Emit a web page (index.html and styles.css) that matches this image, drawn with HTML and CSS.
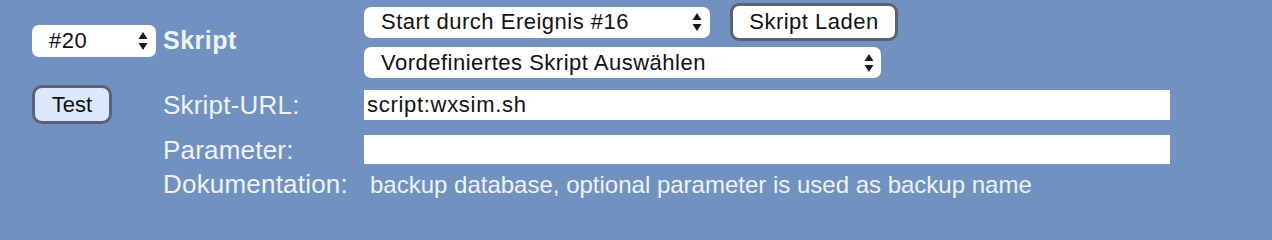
FILE: index.html
```html
<!DOCTYPE html>
<html lang="de">
<head>
<meta charset="utf-8">
<title>Skript</title>
<link rel="stylesheet" href="styles.css">
</head>
<body>
<div class="form">
  <div class="cell c1 r1">
    <div class="select sel-num" role="combobox"><span>#20</span>
      <svg class="arrows" viewBox="0 0 10 18" width="10" height="18"><path d="M5 0 L9.5 7 L0.5 7 Z M0.5 11 L9.5 11 L5 18 Z"/></svg>
    </div>
  </div>
  <div class="cell c2 r1"><span class="title">Skript</span></div>
  <div class="cell c3 r1 stack">
    <div class="line">
      <div class="select sel-event" role="combobox"><span>Start durch Ereignis #16</span>
        <svg class="arrows" viewBox="0 0 10 18" width="10" height="18"><path d="M5 0 L9.5 7 L0.5 7 Z M0.5 11 L9.5 11 L5 18 Z"/></svg>
      </div>
      <button class="btn btn-load">Skript Laden</button>
    </div>
    <div class="select sel-pre" role="combobox"><span>Vordefiniertes Skript Auswählen</span>
      <svg class="arrows" viewBox="0 0 10 18" width="10" height="18"><path d="M5 0 L9.5 7 L0.5 7 Z M0.5 11 L9.5 11 L5 18 Z"/></svg>
    </div>
  </div>

  <div class="cell c1 r2"><button class="btn btn-test">Test</button></div>
  <div class="cell c2 r2 label">Skript-URL:</div>
  <div class="cell c3 r2"><input class="field" type="text" value="script:wxsim.sh"></div>

  <div class="cell c2 r3 label">Parameter:</div>
  <div class="cell c3 r3"><input class="field" type="text" value=""></div>

  <div class="cell c2 r4 label">Dokumentation:</div>
  <div class="cell c3 r4 doc">backup database, optional parameter is used as backup name</div>
</div>
</body>
</html>
```

FILE: styles.css
```css
html, body {
  margin: 0;
  padding: 0;
  background: #7191c0;
}
body {
  width: 1272px;
  height: 206px;
  overflow: hidden;
  font-family: "Liberation Sans", Arial, sans-serif;
}
.form {
  display: grid;
  grid-template-columns: 131px 201px 1fr;
  grid-template-rows: 75px 53px 37px 32px;
  padding: 3px 0 0 32px;
}
.cell {
  display: flex;
  align-items: center;
  min-width: 0;
}
.c1 { grid-column: 1; }
.c2 { grid-column: 2; }
.c3 { grid-column: 3; }
.r1 { grid-row: 1; }
.r2 { grid-row: 2; }
.r3 { grid-row: 3; }
.r4 { grid-row: 4; }

.title {
  font-weight: bold;
  font-size: 25px;
  line-height: 1;
  letter-spacing: 0.5px;
  color: #eef1f7;
  margin-top: -1px;
}
.label {
  font-size: 26px;
  line-height: 30px;
  letter-spacing: 0.2px;
  color: #eef1f7;
}
.stack {
  flex-direction: column;
  align-items: flex-start;
  justify-content: center;
  gap: 6px;
}
.line {
  display: flex;
  align-items: center;
  gap: 20px;
}
.select {
  box-sizing: border-box;
  display: flex;
  align-items: center;
  justify-content: space-between;
  background: #ffffff;
  border-radius: 7px;
  color: #111;
  font-size: 22px;
  letter-spacing: 0.5px;
  padding: 0 8px 0 17px;
  white-space: nowrap;
}
.arrows {
  fill: #1a1a1a;
  flex: none;
}
.sel-num {
  width: 124px;
  height: 32px;
  margin-top: 1px;
}
.sel-event {
  width: 346px;
  height: 31px;
}
.sel-pre {
  width: 517px;
  height: 31px;
  padding-right: 7px;
}
.btn {
  box-sizing: border-box;
  font-family: "Liberation Sans", Arial, sans-serif;
  font-size: 22px;
  letter-spacing: 0.5px;
  color: #111;
  padding: 0;
  margin: 0;
  cursor: pointer;
}
.btn-load {
  width: 168px;
  height: 38px;
  background: #ffffff;
  border: 3px solid #5b6270;
  border-radius: 9px;
}
.btn-test {
  width: 80px;
  height: 39px;
  background: #dbe8fb;
  border: 3.5px solid #5b6270;
  border-radius: 10px;
  letter-spacing: 0;
}
.field {
  box-sizing: border-box;
  width: 806px;
  height: 30px;
  border: none;
  border-radius: 0;
  outline: none;
  background: #ffffff;
  margin: 0;
  padding: 0 0 0 3px;
  font-family: "Liberation Sans", Arial, sans-serif;
  font-size: 22px;
  letter-spacing: 0.7px;
  color: #111;
}
.r3 .field {
  height: 29px;
}
.doc {
  font-size: 24px;
  line-height: 30px;
  color: #eef1f7;
  padding-left: 6px;
  padding-top: 2px;
  white-space: nowrap;
}
```
